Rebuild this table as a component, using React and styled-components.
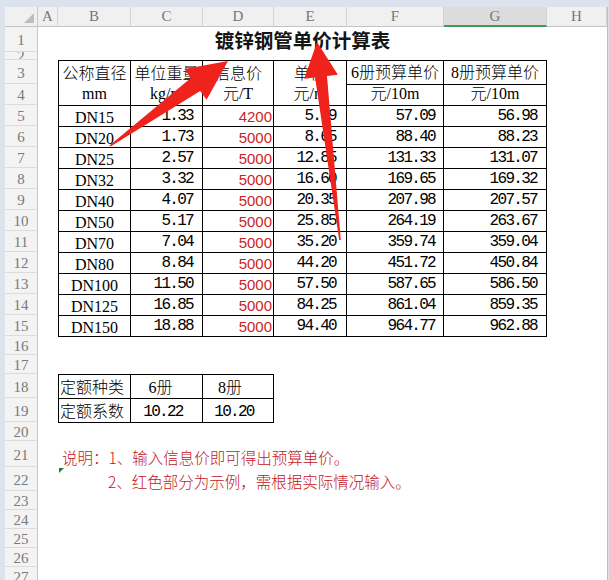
import React from "react";
import styled, { createGlobalStyle } from "styled-components";

const CJK = `"Noto Sans CJK SC", sans-serif`;
const SERIF = `"Liberation Serif", "Noto Sans CJK SC", serif`;
const MONO = `"Liberation Mono", monospace`;
const SANS = `"Liberation Sans", sans-serif`;

const ROW_HEIGHTS = [
  25, 8, 24, 21, 21, 21, 21, 21, 21, 21, 21, 21, 21, 21, 21,
  19, 19, 24, 24, 19, 26, 24, 19, 19, 19, 19, 19,
];
const COLS = ["A", "B", "C", "D", "E", "F", "G", "H"];

const GlobalStyle = createGlobalStyle`
  html, body { margin: 0; padding: 0; background: #fff; }
  body { width: 609px; height: 580px; overflow: hidden; }
`;

const Window = styled.div`
  position: relative;
  width: 609px;
  height: 580px;
  overflow: hidden;
  box-sizing: border-box;
  padding: 7px 0 0 5px;
  background: #dce3ec;
`;

const Sheet = styled.div`
  display: grid;
  grid-template-columns: 33px 20px 73px 72px 71px 73px 97px 103px 60px;
  grid-template-rows: 20px ${ROW_HEIGHTS.map((h) => h + "px").join(" ")};
  width: max-content;
  height: 600px;
  background: #fff;
  border-right: 1px solid #b4bfcd;
`;

const Corner = styled.div`
  box-sizing: border-box;
  background: #f0f0f0;
  border-right: 1px solid #c8c8c8;
  border-bottom: 1px solid #c3c3c3;
  display: flex;
  justify-content: flex-end;
  align-items: flex-end;
  padding: 0 3px 3px 0;
`;

const CornerMark = styled.div`
  width: 10px;
  height: 10px;
  background: #bdbdbd;
  clip-path: polygon(100% 0, 100% 100%, 0 100%);
`;

const ColHead = styled.div`
  box-sizing: border-box;
  background: ${(p) => (p.$active ? "#dcdcdc" : "#f0f0f0")};
  border-right: 1px solid #d4d4d4;
  border-bottom: ${(p) => (p.$active ? "2px solid #3e9a55" : "1px solid #c3c3c3")};
  display: flex;
  align-items: center;
  justify-content: center;
  font: 15px ${SERIF};
  color: #777;
`;

const RowHead = styled.div`
  grid-column: 1;
  grid-row: ${(p) => p.$row + 1};
  box-sizing: border-box;
  background: #f3f3f3;
  border-right: 1px solid #c8c8c8;
  border-bottom: 1px solid #dcdcdc;
  display: flex;
  justify-content: center;
  align-items: ${(p) => (p.$short ? "flex-start" : "center")};
  padding-top: ${(p) => (p.$short ? 0 : 3)}px;
  overflow: hidden;
  font: 15px ${SERIF};
  line-height: ${(p) => (p.$short ? 8 : 15)}px;
  color: #7a7a7a;
`;

const Title = styled.div`
  grid-column: 3 / 9;
  grid-row: 2;
  display: flex;
  justify-content: center;
  align-items: flex-end;
  font: 700 19.5px ${CJK};
  line-height: 24px;
  color: #151515;
`;

const Table = styled.div`
  grid-column: ${(p) => p.$cols};
  grid-row: ${(p) => p.$rows};
  align-self: start;
  display: grid;
  grid-template-columns: ${(p) => p.$colTemplate};
  grid-template-rows: ${(p) => p.$rowTemplate};
  grid-auto-rows: 21px;
  border-top: 1px solid #000;
  border-left: 1px solid #000;
`;

const Cell = styled.div`
  box-sizing: border-box;
  border-right: 1px solid #000;
  border-bottom: 1px solid #000;
  display: flex;
  align-items: flex-end;
  justify-content: ${(p) =>
    p.$align === "left" ? "flex-start" : p.$align === "right" ? "flex-end" : "center"};
  padding: 0 ${(p) => p.$pr || 0}px 0 ${(p) => p.$pl || 0}px;
  white-space: nowrap;
  overflow: hidden;
  color: #000;
`;

const HeadCell = styled(Cell)`
  grid-row: span ${(p) => p.$span || 1};
  flex-direction: column;
  justify-content: flex-end;
  align-items: center;
  font: 300 16px ${SERIF};
  line-height: 20px;
  padding-bottom: 1px;
`;

const NameCell = styled(Cell)`
  font: 16px ${SERIF};
  line-height: 17px;
`;

const TextCell = styled(Cell)`
  font: 300 16px ${SERIF};
  line-height: 21px;
`;

const NumCell = styled(Cell)`
  font: 16px ${MONO};
  letter-spacing: -1.7px;
  line-height: 17px;
  padding-bottom: 1px;
`;

const PriceCell = styled(Cell)`
  font: 15px ${SANS};
  line-height: 17px;
  padding-bottom: 1px;
  color: #cc1f24;
`;

const Note = styled.div`
  position: relative;
  grid-column: 3 / 10;
  grid-row: ${(p) => p.$row + 1};
  display: flex;
  align-items: flex-end;
  padding-left: ${(p) => p.$indent}px;
  font: 300 15.5px ${CJK};
  line-height: 20px;
  white-space: nowrap;
  color: #c3161c;
`;

const ErrorFlag = styled.span`
  position: absolute;
  top: 1px;
  left: 1px;
  width: 0;
  height: 0;
  border-top: 5px solid #1f7a35;
  border-right: 5px solid transparent;
`;

const Overlay = styled.svg`
  position: absolute;
  left: 0;
  top: 0;
  pointer-events: none;
`;

const rows = [
  ["DN15", "1.33", "4200", "5.59", "57.09", "56.98"],
  ["DN20", "1.73", "5000", "8.65", "88.40", "88.23"],
  ["DN25", "2.57", "5000", "12.85", "131.33", "131.07"],
  ["DN32", "3.32", "5000", "16.60", "169.65", "169.32"],
  ["DN40", "4.07", "5000", "20.35", "207.98", "207.57"],
  ["DN50", "5.17", "5000", "25.85", "264.19", "263.67"],
  ["DN70", "7.04", "5000", "35.20", "359.74", "359.04"],
  ["DN80", "8.84", "5000", "44.20", "451.72", "450.84"],
  ["DN100", "11.50", "5000", "57.50", "587.65", "586.50"],
  ["DN125", "16.85", "5000", "84.25", "861.04", "859.35"],
  ["DN150", "18.88", "5000", "94.40", "964.77", "962.88"],
];

function arrow(tail, tip, headLen, headHalf, shaftHalf, tailHalf) {
  const dx = tip[0] - tail[0];
  const dy = tip[1] - tail[1];
  const L = Math.hypot(dx, dy);
  const ux = dx / L, uy = dy / L;
  const nx = -uy, ny = ux;
  const bx = tip[0] - headLen * ux, by = tip[1] - headLen * uy;
  const pts = [
    [tail[0] + tailHalf * nx, tail[1] + tailHalf * ny],
    [bx + shaftHalf * nx, by + shaftHalf * ny],
    [bx + headHalf * nx, by + headHalf * ny],
    tip,
    [bx - headHalf * nx, by - headHalf * ny],
    [bx - shaftHalf * nx, by - shaftHalf * ny],
    [tail[0] - tailHalf * nx, tail[1] - tailHalf * ny],
  ];
  return pts.map((p) => p[0].toFixed(1) + "," + p[1].toFixed(1)).join(" ");
}

export default function App() {
  return (
    <>
      <GlobalStyle />
      <Window>
        <Sheet>
          <Corner>
            <CornerMark />
          </Corner>
          {COLS.map((c) => (
            <ColHead key={c} $active={c === "G"}>
              {c}
            </ColHead>
          ))}
          {ROW_HEIGHTS.map((h, i) => (
            <RowHead key={i} $row={i + 1} $short={h < 12}>
              {i + 1}
            </RowHead>
          ))}

          <Title>镀锌钢管单价计算表</Title>

          <Table
            $cols="3 / 9"
            $rows="4 / 17"
            $colTemplate="72px 72px 71px 73px 97px 103px"
            $rowTemplate="24px 21px"
          >
            <HeadCell $span={2}>
              <span>公称直径</span>
              <span>mm</span>
            </HeadCell>
            <HeadCell $span={2}>
              <span>单位重量</span>
              <span>kg/m</span>
            </HeadCell>
            <HeadCell $span={2}>
              <span>信息价</span>
              <span>元/T</span>
            </HeadCell>
            <HeadCell $span={2}>
              <span>单价</span>
              <span>元/m</span>
            </HeadCell>
            <HeadCell>6册预算单价</HeadCell>
            <HeadCell>8册预算单价</HeadCell>
            <HeadCell>元/10m</HeadCell>
            <HeadCell>元/10m</HeadCell>
            {rows.map((r) => (
              <React.Fragment key={r[0]}>
                <NameCell>{r[0]}</NameCell>
                <NumCell $align="right" $pr={9}>{r[1]}</NumCell>
                <PriceCell $align="right" $pr={1}>{r[2]}</PriceCell>
                <NumCell $align="right" $pr={10}>{r[3]}</NumCell>
                <NumCell $align="right" $pr={8}>{r[4]}</NumCell>
                <NumCell $align="right" $pr={9}>{r[5]}</NumCell>
              </React.Fragment>
            ))}
          </Table>

          <Table
            $cols="3 / 6"
            $rows="19 / 21"
            $colTemplate="72px 72px 71px"
            $rowTemplate="24px 24px"
          >
            <TextCell $align="left" $pl={1}>定额种类</TextCell>
            <TextCell $pr={12}>6册</TextCell>
            <TextCell $pr={16}>8册</TextCell>
            <TextCell $align="left" $pl={1}>定额系数</TextCell>
            <NumCell $pr={7}>10.22</NumCell>
            <NumCell $pr={8}>10.20</NumCell>
          </Table>

          <Note $row={21} $indent={4}>
            说明：1、输入信息价即可得出预算单价。
          </Note>
          <Note $row={22} $indent={50}>
            <ErrorFlag />
            2、红色部分为示例，需根据实际情况输入。
          </Note>
        </Sheet>

        <Overlay width="609" height="580" viewBox="0 0 609 580">
          <polygon points={arrow([110, 146], [228, 61], 40, 19, 8, 0.8)} fill="#f0221c" />
          <polygon points={arrow([340, 240], [317, 42], 35, 17, 6, 0.8)} fill="#f0221c" />
        </Overlay>
      </Window>
    </>
  );
}
